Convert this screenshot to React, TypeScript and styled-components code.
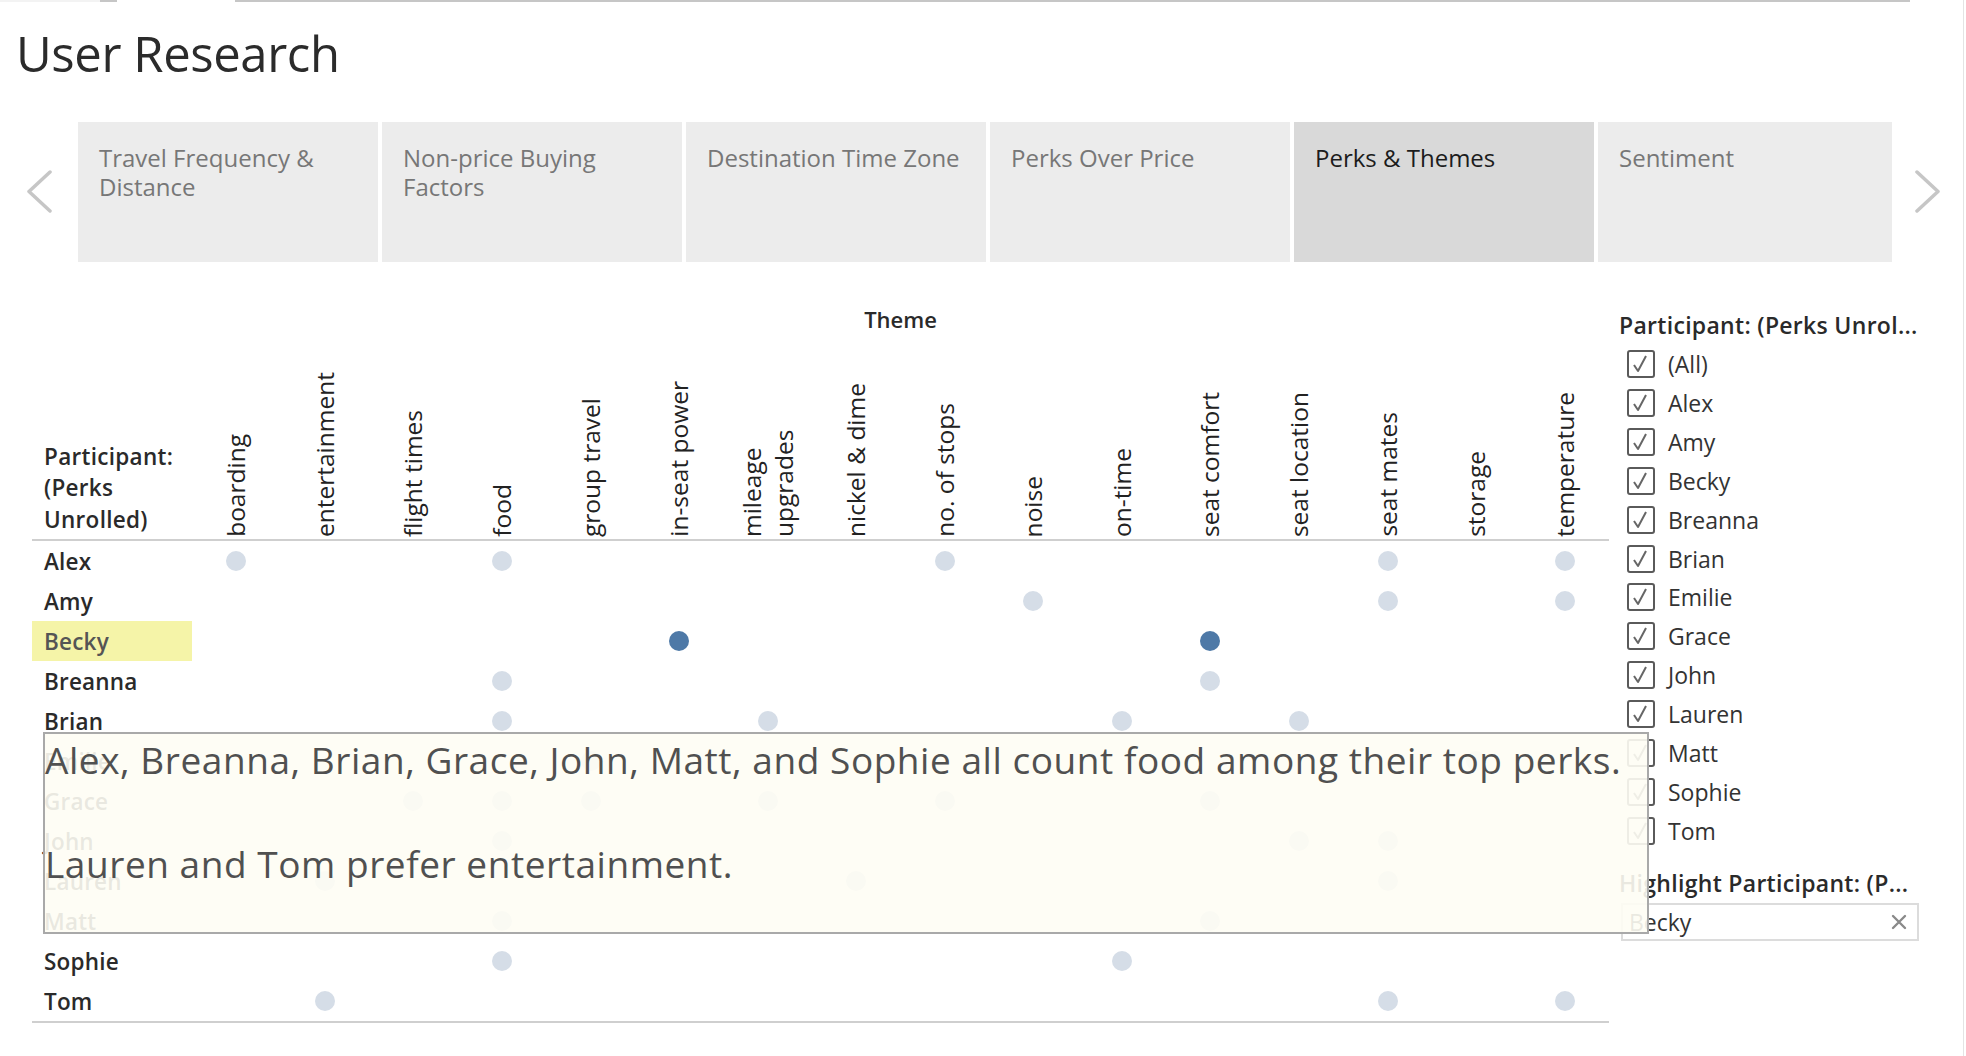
import React from "react";
import styled, { createGlobalStyle } from "styled-components";

const GlobalStyle = createGlobalStyle`
  html, body { margin: 0; padding: 0; background: #ffffff; }
  body { font-family: "Open Sans", "Noto Sans", sans-serif; color: #333; }
  * { box-sizing: border-box; }
`;

const FONT = `"Open Sans", "Noto Sans", sans-serif`;

const Page = styled.div`
  position: relative;
  width: 1964px;
  height: 1056px;
  overflow: hidden;
  border-right: 1px solid #e4e4e4;
  background: #fff;
`;

const TopRule = styled.div`
  display: flex;
  height: 2px;
`;

const RuleSegment = styled.div<{ $w: number; $c: string }>`
  flex: 0 0 ${(p) => p.$w}px;
  background: ${(p) => p.$c};
`;

const Title = styled.h1`
  margin: 21px 0 0 0;
  padding-left: 16px;
  font-family: ${FONT};
  font-weight: 400;
  font-size: 49px;
  line-height: 60px;
  letter-spacing: -0.4px;
  color: #2b2b2b;
`;

const TabStrip = styled.nav`
  display: grid;
  grid-template-columns: 78px 1814px 1fr;
  height: 140px;
  margin-top: 39px;
`;

const NavArrow = styled.button`
  display: flex;
  align-items: center;
  justify-content: center;
  border: none;
  background: transparent;
  padding: 0 0 2px 0;
  cursor: pointer;
`;

const Tabs = styled.div`
  display: flex;
  gap: 4px;
`;

const Tab = styled.div<{ $active?: boolean }>`
  flex: 0 0 300px;
  &:last-child {
    flex: 1 1 auto;
  }
  padding: 21px 10px 0 21px;
  background: ${(p) => (p.$active ? "#d9d9d9" : "#ececec")};
  color: ${(p) => (p.$active ? "#1c1c1c" : "#777777")};
  font-family: ${FONT};
  font-size: 24px;
  line-height: 29px;
  white-space: pre-line;
  letter-spacing: 0;
`;

const Main = styled.div`
  position: relative;
  display: flex;
  gap: 10px;
  padding: 42px 0 0 32px;
`;

const Chart = styled.section`
  width: 1577px;
  flex: none;
`;

const ChartTitle = styled.div`
  font-family: ${FONT};
  font-weight: 600;
  font-size: 22px;
  line-height: 30px;
  text-align: center;
  padding-left: 160px;
  color: #2a2a2a;
`;

const GridRow = styled.div<{ $h: number }>`
  display: grid;
  grid-template-columns: 160px repeat(16, 1fr);
  height: ${(p) => p.$h}px;
`;

const HeaderGrid = styled(GridRow)`
  border-bottom: 2px solid #cfcfcf;
`;

const Body = styled.div`
  border-bottom: 2px solid #cfcfcf;
`;

const Corner = styled.div`
  display: flex;
  align-items: flex-end;
  padding: 0 0 4px 12px;
  font-family: ${FONT};
  font-weight: 600;
  font-size: 22.5px;
  line-height: 31.5px;
  letter-spacing: 0.3px;
  color: #2a2a2a;
  white-space: pre-line;
`;

const ColHeader = styled.div`
  display: flex;
  justify-content: center;
  align-items: flex-end;
  padding-bottom: 2px;
`;

const HeaderText = styled.span`
  writing-mode: vertical-rl;
  transform: rotate(180deg);
  max-height: 182px;
  font-family: ${FONT};
  font-size: 24.5px;
  line-height: 32px;
  color: #222;
`;

const RowLabel = styled.div<{ $highlight?: boolean }>`
  display: flex;
  align-items: center;
  padding-left: 12px;
  background: ${(p) => (p.$highlight ? "#f5f4a8" : "transparent")};
  color: ${(p) => (p.$highlight ? "#555" : "#2a2a2a")};
  font-family: ${FONT};
  font-weight: 600;
  font-size: 22.5px;
  letter-spacing: 0.2px;
`;

const Cell = styled.div`
  display: flex;
  align-items: center;
  justify-content: center;
`;

const Dot = styled.span<{ $strong?: boolean }>`
  width: 20px;
  height: 20px;
  border-radius: 50%;
  background: ${(p) => (p.$strong ? "#4e79a7" : "#d5dde7")};
`;

const Panel = styled.aside`
  width: 300px;
  flex: none;
  padding-top: 6px;
`;

const FilterTitle = styled.div<{ $gap?: number }>`
  margin-top: ${(p) => p.$gap ?? 0}px;
  font-family: ${FONT};
  font-weight: 600;
  font-size: 23px;
  line-height: 30px;
  color: #2a2a2a;
  white-space: nowrap;
  letter-spacing: 0.3px;
`;

const CheckList = styled.ul`
  list-style: none;
  margin: 5px 0 0 0;
  padding: 0;
`;

const CheckRow = styled.li`
  display: flex;
  align-items: center;
  gap: 13px;
  height: 38.85px;
  padding-left: 8px;
`;

const Box = styled.span`
  display: flex;
  align-items: center;
  justify-content: center;
  width: 28px;
  height: 28px;
  border: 2px solid #5a5a5a;
  border-radius: 3px;
  background: #fff;
`;

const CheckLabel = styled.span`
  font-family: ${FONT};
  font-size: 23px;
  color: #333;
`;

const SearchBox = styled.div`
  display: flex;
  align-items: center;
  justify-content: space-between;
  width: 298px;
  height: 38px;
  margin: 5px 0 0 2px;
  padding: 0 10px 0 6px;
  border: 2px solid #dcdcdc;
  background: #fff;
`;

const SearchText = styled.span`
  font-family: ${FONT};
  font-size: 23px;
  color: #333;
`;

const Annotation = styled.div`
  position: absolute;
  left: 43px;
  top: 470px;
  width: 1606px;
  height: 202px;
  border: 2px solid #a9a9a9;
  background: rgba(254, 253, 244, 0.9);
  font-family: ${FONT};
  font-size: 37px;
  line-height: 52px;
  color: #505050;
  letter-spacing: 0.55px;
  white-space: nowrap;
`;

const AnnotationLine = styled.p`
  margin: 0;
  min-height: 52px;
`;

const tabs = [
  "Travel Frequency &\nDistance",
  "Non-price Buying\nFactors",
  "Destination Time Zone",
  "Perks Over Price",
  "Perks & Themes",
  "Sentiment",
];

const themes = [
  "boarding",
  "entertainment",
  "flight times",
  "food",
  "group travel",
  "in-seat power",
  "mileage upgrades",
  "nickel & dime",
  "no. of stops",
  "noise",
  "on-time",
  "seat comfort",
  "seat location",
  "seat mates",
  "storage",
  "temperature",
];

const participants: { name: string; perks: number[]; highlight?: boolean }[] = [
  { name: "Alex", perks: [0, 3, 8, 13, 15] },
  { name: "Amy", perks: [9, 13, 15] },
  { name: "Becky", perks: [5, 11], highlight: true },
  { name: "Breanna", perks: [3, 11] },
  { name: "Brian", perks: [3, 6, 10, 12] },
  { name: "Emilie", perks: [4, 14] },
  { name: "Grace", perks: [2, 3, 4, 6, 8, 11] },
  { name: "John", perks: [3, 12, 13] },
  { name: "Lauren", perks: [1, 7, 13] },
  { name: "Matt", perks: [3, 11] },
  { name: "Sophie", perks: [3, 10] },
  { name: "Tom", perks: [1, 13, 15] },
];

const filterItems = ["(All)", ...participants.map((p) => p.name)];

const Chevron = ({ dir }: { dir: "left" | "right" }) => (
  <svg width="27" height="43" viewBox="0 0 27 43" fill="none">
    <polyline
      points={dir === "left" ? "24,2 3,21.5 24,41" : "3,2 24,21.5 3,41"}
      stroke="#c6c6c6"
      strokeWidth="3.5"
      strokeLinecap="round"
      strokeLinejoin="round"
    />
  </svg>
);

const CheckMark = () => (
  <svg width="20" height="20" viewBox="0 0 20 20" fill="none">
    <polyline points="3,11 7,17 15,2" stroke="#666" strokeWidth="2" strokeLinejoin="round" />
  </svg>
);

const ClearIcon = () => (
  <svg width="16" height="16" viewBox="0 0 16 16" fill="none">
    <path d="M2 2 L14 14 M14 2 L2 14" stroke="#8a8a8a" strokeWidth="2.4" strokeLinecap="round" />
  </svg>
);

export default function App() {
  return (
    <>
      <GlobalStyle />
      <Page>
        <TopRule>
          <RuleSegment $w={100} $c="#f3f3f3" />
          <RuleSegment $w={17} $c="#c6c6c6" />
          <RuleSegment $w={118} $c="transparent" />
          <RuleSegment $w={1675} $c="#c6c6c6" />
        </TopRule>
        <Title>User Research</Title>
        <TabStrip>
          <NavArrow aria-label="Previous">
            <Chevron dir="left" />
          </NavArrow>
          <Tabs>
            {tabs.map((t) => (
              <Tab key={t} $active={t === "Perks & Themes"}>
                {t}
              </Tab>
            ))}
          </Tabs>
          <NavArrow aria-label="Next">
            <Chevron dir="right" />
          </NavArrow>
        </TabStrip>
        <Main>
          <Chart>
            <ChartTitle>Theme</ChartTitle>
            <HeaderGrid $h={207}>
              <Corner>{"Participant:\n(Perks\nUnrolled)"}</Corner>
              {themes.map((t) => (
                <ColHeader key={t}>
                  <HeaderText>{t}</HeaderText>
                </ColHeader>
              ))}
            </HeaderGrid>
            <Body>
              {participants.map((p) => (
                <GridRow key={p.name} $h={40}>
                  <RowLabel $highlight={p.highlight}>{p.name}</RowLabel>
                  {themes.map((t, i) => (
                    <Cell key={t}>{p.perks.includes(i) && <Dot $strong={p.highlight} />}</Cell>
                  ))}
                </GridRow>
              ))}
            </Body>
          </Chart>
          <Panel>
            <FilterTitle>Participant: (Perks Unrol...</FilterTitle>
            <CheckList>
              {filterItems.map((n) => (
                <CheckRow key={n}>
                  <Box>
                    <CheckMark />
                  </Box>
                  <CheckLabel>{n}</CheckLabel>
                </CheckRow>
              ))}
            </CheckList>
            <FilterTitle $gap={18}>Highlight Participant: (P...</FilterTitle>
            <SearchBox>
              <SearchText>Becky</SearchText>
              <ClearIcon />
            </SearchBox>
          </Panel>
          <Annotation>
            <AnnotationLine>
              Alex, Breanna, Brian, Grace, John, Matt, and Sophie all count food among their top perks.
            </AnnotationLine>
            <AnnotationLine />
            <AnnotationLine>Lauren and Tom prefer entertainment.</AnnotationLine>
          </Annotation>
        </Main>
      </Page>
    </>
  );
}
